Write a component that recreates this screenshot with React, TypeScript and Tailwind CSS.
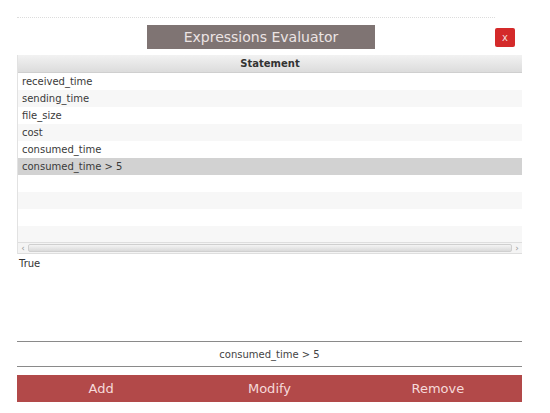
import React from 'react'

const rows = [
  'received_time',
  'sending_time',
  'file_size',
  'cost',
  'consumed_time',
  'consumed_time > 5',
  '',
  '',
  '',
  '',
]

const font = { fontFamily: '"DejaVu Sans", "Liberation Sans", sans-serif' }

export default function App() {
  return (
    <div className="w-[550px] h-[413px] bg-white relative overflow-hidden" style={font}>
      {/* dotted top edge */}
      <div className="mx-[17px] mt-[17px] h-px border-t border-dotted border-[#dcdcdc] w-[478px]" />

      {/* title row */}
      <div className="relative h-[30px] mt-[7px]">
        <div className="absolute left-[147px] top-0 w-[228px] h-[24px] bg-[#7f7473] flex items-center justify-center text-[14px] text-[#ece4e4]">
          Expressions Evaluator
        </div>
        <button className="absolute left-[495px] top-[3px] w-[20px] h-[19px] bg-[#d42a2a] rounded-[2px] text-[#f3dada] text-[10px] flex items-center justify-center">
          x
        </button>
      </div>

      {/* table */}
      <div className="mx-[17px] w-[505px] border-l border-[#e2e2e2]">
        <div className="h-[18px] flex items-center justify-center text-[10px] font-bold text-[#333] bg-gradient-to-b from-[#f2f2f2] to-[#dcdcdc] border-b border-[#cfcfcf]">
          Statement
        </div>
        {rows.map((r, i) => (
          <div
            key={i}
            className={
              'h-[17px] flex items-center pl-[4px] text-[10px] text-[#3a3a3a] ' +
              (i === 5 ? 'bg-[#d2d2d2]' : i % 2 === 1 ? 'bg-[#f7f7f7]' : 'bg-white')
            }
          >
            {r}
          </div>
        ))}
        {/* horizontal scrollbar */}
        <div className="h-[12px] flex items-center bg-[#f4f4f4] border-y border-[#dedede] -mt-[1px]">
          <span className="w-[10px] text-[9px] leading-none text-[#999] text-center">‹</span>
          <div className="flex-1 h-[8px] rounded-[2px] bg-gradient-to-b from-[#f4f4f4] to-[#dadada] border border-[#cfcfcf]" />
          <span className="w-[10px] text-[9px] leading-none text-[#999] text-center">›</span>
        </div>
      </div>

      <div className="ml-[19px] mt-[2px] text-[10px] text-[#333]">True</div>

      {/* expression field */}
      <div className="mx-[17px] w-[505px] mt-[70px] border-t border-b border-[#8a8a8a] h-[26px] flex items-center justify-center text-[10px] text-[#444]">
        consumed_time &gt; 5
      </div>

      {/* action buttons */}
      <div className="mx-[17px] w-[505px] mt-[8px] h-[27px] bg-[#b24949] grid grid-cols-3 text-[13px] text-[#f6dada]">
        <button className="flex items-center justify-center">Add</button>
        <button className="flex items-center justify-center">Modify</button>
        <button className="flex items-center justify-center">Remove</button>
      </div>
    </div>
  )
}
